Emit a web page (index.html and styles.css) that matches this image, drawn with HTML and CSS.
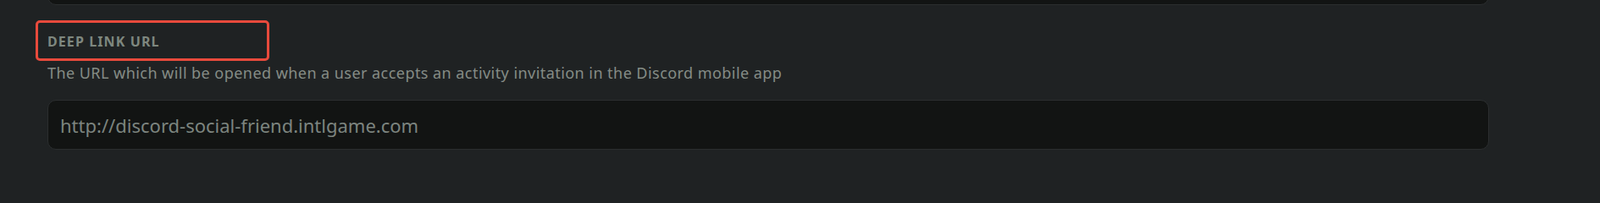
FILE: index.html
```html
<!DOCTYPE html>
<html lang="en">
<head>
<meta charset="utf-8">
<link rel="stylesheet" href="styles.css">
</head>
<body>
<div class="page">
  <div class="field-input field-input-prev"></div>
  <div class="field">
    <div class="label-wrap">
      <h3 class="label">DEEP LINK URL</h3>
      <span class="highlight"></span>
    </div>
    <p class="desc">The URL which will be opened when a user accepts an activity invitation in the Discord mobile app</p>
    <div class="field-input">
      <span class="value">http://discord-social-friend.intlgame.com</span>
    </div>
  </div>
</div>
</body>
</html>
```
FILE: styles.css
```css
html, body {
  margin: 0;
  padding: 0;
  background: #1f2223;
  height: 100%;
  overflow: hidden;
}
.page {
  width: 1702px;
  padding-left: 56px;
  font-family: "Noto Sans", "Liberation Sans", sans-serif;
}
.field-input {
  box-sizing: border-box;
  height: 59px;
  background: #121413;
  border: 1px solid #2b2e2f;
  border-radius: 10px;
  display: flex;
  align-items: center;
  padding: 0 14px;
}
.field-input-prev {
  margin-top: -53px;
}
.field {
  display: flex;
  flex-direction: column;
}
.label-wrap {
  position: relative;
  margin-top: 34px;
  height: 18px;
}
.label {
  margin: 0;
  font-size: 16px;
  line-height: 18px;
  font-weight: 700;
  color: #7e877f;
  letter-spacing: 1.1px;
}
.highlight {
  position: absolute;
  left: -14px;
  top: -16px;
  width: 276px;
  height: 48px;
  box-sizing: border-box;
  border: 3px solid #e84a3c;
  border-radius: 5px;
}
.desc {
  margin: 17px 0 0 0;
  font-size: 18px;
  line-height: 22px;
  letter-spacing: 0.45px;
  color: #858c86;
}
.field-input .value {
  font-size: 22px;
  color: #7c847f;
  line-height: 26px;
}
.field > .field-input {
  margin-top: 21px;
}
```
